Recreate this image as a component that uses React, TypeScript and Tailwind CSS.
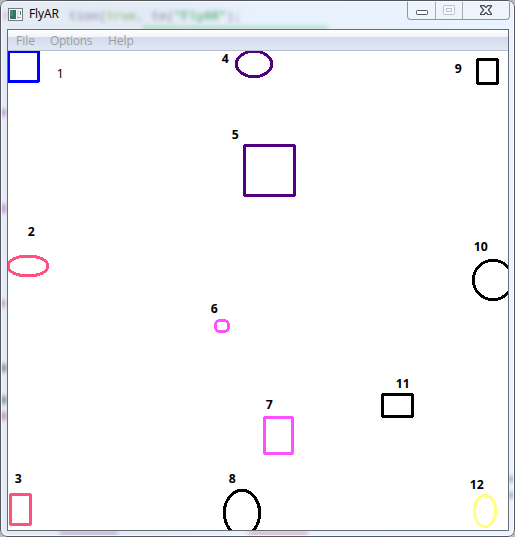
import React from "react";

type Shape = { kind: "rect" | "ellipse"; color: string; box: [number, number, number, number] };

// Rectangles hold x, y, width, height; ellipses hold cx, cy, rx, ry.
const shapes: Shape[] = [
  { kind: "rect", color: "#0000ff", box: [8.5, 51.5, 30, 30] },
  { kind: "ellipse", color: "#ff5080", box: [28, 266, 20, 10] },
  { kind: "rect", color: "#ff5080", box: [10.5, 494.5, 20, 30] },
  { kind: "ellipse", color: "#500080", box: [254, 64, 17.7, 12.7] },
  { kind: "rect", color: "#500080", box: [244.5, 145.5, 50, 50] },
  { kind: "rect", color: "#ff50ff", box: [264.5, 417.5, 28, 36] },
  { kind: "ellipse", color: "#000000", box: [242, 513, 17.7, 22.7] },
  { kind: "rect", color: "#000000", box: [477.5, 59.5, 20, 24] },
  { kind: "ellipse", color: "#000000", box: [493, 280, 19.7, 19.7] },
  { kind: "rect", color: "#000000", box: [382.5, 394.5, 30, 22] },
  { kind: "ellipse", color: "#ffff80", box: [485, 511, 10.7, 15.7] },
];

const labels: [string, number, number][] = [
  ["2", 28, 236],
  ["3", 15, 483],
  ["4", 222, 63],
  ["5", 232, 139],
  ["6", 211, 313],
  ["7", 266, 409],
  ["8", 229, 483],
  ["9", 455, 73],
  ["10", 474, 251],
  ["11", 396, 388],
  ["12", 470, 489],
];

function Canvas() {
  return (
    <svg className="block h-[479px] w-[500px] bg-white" viewBox="8 51 500 479">
      <g fill="none" strokeWidth="3" shapeRendering="crispEdges">
        {shapes.map(({ kind, color, box: [a, b, c, d] }, i) =>
          kind === "rect" ? (
            <rect key={i} x={a} y={b} width={c} height={d} rx="1" stroke={color} />
          ) : (
            <ellipse key={i} cx={a} cy={b} rx={c} ry={d} stroke={color} />
          )
        )}
        <rect x="215.5" y="320.5" width="13" height="11" rx="4.5" stroke="#ff50ff" />
      </g>
      <text x="56.5" y="78" className="font-['Open_Sans','Noto_Sans',sans-serif] text-[13px]">1</text>
      <g className="font-['Open_Sans','Noto_Sans',sans-serif] text-[12.25px] font-bold">
        {labels.map(([text, x, y]) => (
          <text key={text} x={x - 0.2} y={y}>{text}</text>
        ))}
      </g>
    </svg>
  );
}

function AppIcon() {
  return (
    <svg className="h-[13px] w-[15px]" viewBox="0 0 15 13" shapeRendering="crispEdges">
      <rect x="0.5" y="0.5" width="14" height="12" fill="#f8f8f8" stroke="#777b80" />
      <rect x="2" y="2" width="6" height="9" fill="#34735e" />
      <rect x="2" y="2" width="3" height="6" fill="#458d72" />
      <rect x="9" y="2" width="2" height="9" fill="#dce1e5" />
      <rect x="12" y="3" width="1" height="4" fill="#3e8271" />
      <rect x="9" y="9" width="4" height="1" fill="#a4acb4" />
    </svg>
  );
}

function WindowButtons() {
  return (
    <div className="mr-[5px] flex h-[19px] w-[103px] rounded-b-[4px] border border-t-0 border-[#8e979f] bg-[#eef4fb]">
      <div className="flex w-[28px] justify-center border-r border-[#a4adb5] pt-[9px]">
        <svg className="h-[5px] w-3" viewBox="0 0 12 5">
          <rect x=".5" y=".5" width="11" height="4" rx=".8" fill="#fff" stroke="#535666" />
        </svg>
      </div>
      <div className="flex w-[27px] justify-center border-r border-[#a4adb5] pt-[4px]">
        <svg className="h-[10px] w-3" viewBox="0 0 12 10">
          <rect x=".5" y=".5" width="11" height="9" rx=".8" fill="#f7f9fc" stroke="#bcc2c8" />
          <rect x="3.5" y="3.5" width="5" height="3" fill="#f7f9fc" stroke="#bcc2c8" />
        </svg>
      </div>
      <div className="flex flex-1 justify-center pt-[4px]">
        <svg className="h-[10px] w-3" viewBox="0 0 12 10">
          <path d="M.6.5H4L6 2.7 8 .5h3.4v.8L8.3 5l3.1 3.7v.8H8L6 7.3 4 9.5H.6v-.8L3.7 5 .6 1.3Z" fill="#fff" stroke="#464959" strokeWidth="1.25" strokeLinejoin="round" />
        </svg>
      </div>
    </div>
  );
}

// Blurred code behind the translucent window frame.
function GlassBackdrop() {
  return (
    <svg className="absolute inset-0 h-full w-full" viewBox="0 0 515 537">
      <defs>
        <linearGradient id="glass" x1="0" x2="1" y1="0" y2="0">
          <stop offset="0" stopColor="#e4ebf6" />
          <stop offset=".3" stopColor="#e3ebf5" />
          <stop offset=".5" stopColor="#e8f2fd" />
          <stop offset="1" stopColor="#eaf3fe" />
        </linearGradient>
        <filter id="soft" x="-30%" y="-80%" width="160%" height="260%">
          <feGaussianBlur stdDeviation="2" />
        </filter>
        <filter id="code" x="-10%" y="-50%" width="120%" height="200%">
          <feGaussianBlur stdDeviation="2" />
        </filter>
      </defs>
      <rect width="515" height="537" fill="url(#glass)" />
      <text x="69" y="20" filter="url(#code)" fill="#9da1b0" className="font-['Liberation_Mono',monospace] text-[12.5px] font-bold">
        tion(<tspan fill="#a3bd8e">true</tspan>, te(<tspan fill="#6fb78c">"FlyAR"</tspan>);
      </text>
      <g filter="url(#soft)">
        <rect x="2" y="12" width="14" height="7" fill="#dccfe6" />
        <rect x="142" y="26" width="186" height="4" fill="#b4dac5" />
        <rect x="1" y="109" width="5" height="7" fill="#b995cd" />
        <rect x="1" y="204" width="5" height="9" fill="#b995cd" />
        <rect x="1" y="300" width="4" height="7" fill="#b991aa" />
        <rect x="1" y="364" width="5" height="8" fill="#778495" />
        <rect x="1" y="396" width="5" height="8" fill="#778495" />
        <rect x="1" y="412" width="5" height="8" fill="#b991aa" />
        <rect x="60" y="531" width="58" height="5" fill="#c4b2da" />
        <rect x="248" y="531" width="60" height="5" fill="#d2b8cb" />
        <rect x="509" y="476" width="5" height="6" fill="#98a6b7" />
        <rect x="509" y="492" width="5" height="6" fill="#98a6b7" />
      </g>
    </svg>
  );
}

export default function App() {
  return (
    <div className="h-[537px] w-[515px] bg-[#b8b8b8]">
      <div className="relative h-[537px] w-[515px] overflow-hidden rounded-[7px] font-['Open_Sans','Noto_Sans',sans-serif]">
        <GlassBackdrop />
        <div className="relative h-full">
          <header className="flex h-[29px] items-start pt-px">
            <div className="flex flex-1 items-center pl-[8px] pt-[4px]">
              <AppIcon />
              <span className="ml-[6px] text-[12px] leading-[18px] tracking-[-0.1px] text-black">FlyAR</span>
            </div>
            <WindowButtons />
          </header>
          <main className="ml-[7px] h-[502px] w-[502px] border border-[#686d73] bg-white">
            <nav className="flex h-[21px] items-center border-b border-[#b6bcd1] bg-[linear-gradient(to_bottom,#ffffff_0,#f2f4f8_7px,#d4daec_7px,#e2e7f3_20px)] pl-[8px] pt-[2px] text-[12px] leading-[18px] text-[#9b9da3]">
              <span className="w-[34px]">File</span>
              <span className="w-[58px] tracking-[-0.3px]">Options</span>
              <span>Help</span>
            </nav>
            <Canvas />
          </main>
        </div>
        <div className="pointer-events-none absolute inset-0 rounded-[7px] border border-[#55565a] shadow-[inset_0_0_0_1px_rgba(255,255,255,0.7)]" />
      </div>
    </div>
  );
}
